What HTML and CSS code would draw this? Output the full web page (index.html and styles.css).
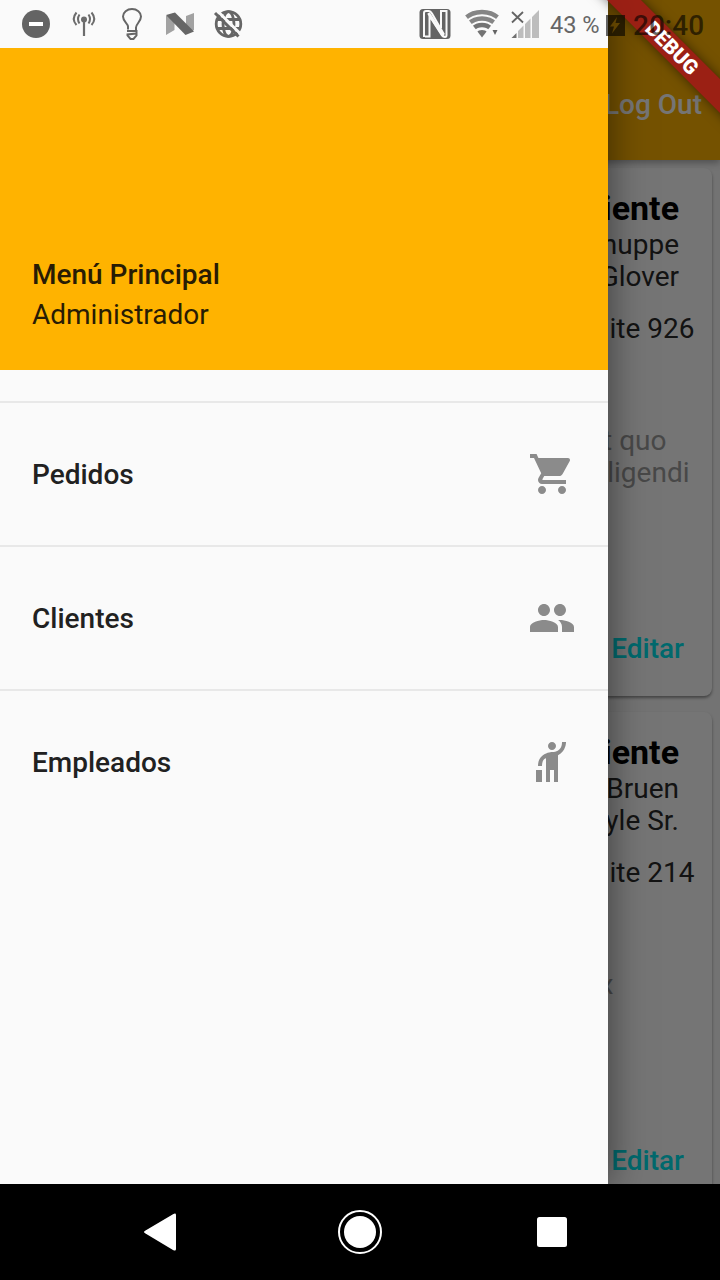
FILE: index.html
```html
<!DOCTYPE html>
<html lang="es">
<head>
<meta charset="utf-8">
<title>Menú Principal</title>
<link rel="stylesheet" href="styles.css">
</head>
<body>
<div class="phone">
  <div class="screen">
    <main class="app">
      <header class="appbar"><span class="logout">Log Out</span></header>
      <div class="cards">
        <article class="card">
          <h2 class="card-title">iente</h2>
          <p class="line">huppe</p>
          <p class="line">Glover</p>
          <p class="line address">ite 926</p>
          <div class="notes">
            <p class="line note-short">t quo</p>
            <p class="line">ligendi</p>
          </div>
          <a class="edit">Editar</a>
        </article>
        <article class="card">
          <h2 class="card-title">iente</h2>
          <p class="line">Bruen</p>
          <p class="line">yle Sr.</p>
          <p class="line address">ite 214</p>
          <div class="notes">
            <p class="line note-end">x</p>
          </div>
          <a class="edit">Editar</a>
        </article>
      </div>
    </main>
    <div class="scrim"></div>
    <aside class="drawer">
      <header class="drawer-header">
        <strong class="drawer-title">Menú Principal</strong>
        <span class="drawer-role">Administrador</span>
      </header>
      <nav class="menu">
        <a class="item"><span>Pedidos</span>
          <svg class="icon" viewBox="0 0 24 24"><path d="M7 18c-1.1 0-1.99.9-1.99 2S5.9 22 7 22s2-.9 2-2-.9-2-2-2zM1 2v2h2l3.6 7.59-1.35 2.45c-.16.28-.25.61-.25.96 0 1.1.9 2 2 2h12v-2H7.42c-.14 0-.25-.11-.25-.25l.03-.12.9-1.63h7.45c.75 0 1.41-.41 1.75-1.03l3.58-6.49c.08-.14.12-.31.12-.48 0-.55-.45-1-1-1H5.21l-.94-2H1zm16 16c-1.1 0-1.99.9-1.99 2s.89 2 1.99 2 2-.9 2-2-.9-2-2-2z"/></svg>
        </a>
        <a class="item"><span>Clientes</span>
          <svg class="icon" viewBox="0 0 24 24"><path d="M16 11c1.66 0 2.99-1.34 2.99-3S17.66 5 16 5c-1.66 0-3 1.34-3 3s1.34 3 3 3zm-8 0c1.66 0 2.99-1.34 2.99-3S9.66 5 8 5C6.34 5 5 6.34 5 8s1.34 3 3 3zm0 2c-2.33 0-7 1.17-7 3.5V19h14v-2.5c0-2.33-4.67-3.5-7-3.5zm8 0c-.29 0-.62.02-.97.05 1.16.84 1.97 1.97 1.97 3.45V19h6v-2.5c0-2.33-4.67-3.5-7-3.5z"/></svg>
        </a>
        <a class="item"><span>Empleados</span>
          <svg class="icon" viewBox="0 0 24 24"><path d="M12 6c-1.1 0-2-.9-2-2s.9-2 2-2 2 .9 2 2-.9 2-2 2zm5-4h2c0 .4 0 4.5-4 6.66V22h-2v-6h-2v6H9V10.1c-.3.1-.5.2-.6.3-.5.3-1.4 1.2-1.4 3.6H5c0-2.1.65-4.1 2.3-5.3C9.7 7 12 7 12 7c5 0 5-4 5-5zM4 16h3v6H4z"/></svg>
        </a>
      </nav>
    </aside>
    <div class="debug"><span class="debug-band">DEBUG</span></div>
    <div class="status">
      <svg class="status-left" viewBox="0 0 260 48">
        <circle cx="36" cy="24" r="14" fill="#646464"/><path d="M29 24h14" stroke="#fff" stroke-width="4"/>
        <g fill="none" stroke="#6c6c6c" stroke-width="2">
          <circle cx="84" cy="19.500" r="3" fill="#6c6c6c" stroke="none"/>
          <path d="M84 20v16" stroke-width="2.200"/>
          <path d="M79.500 14.500q-3 4.500 0 9M88.500 14.500q3 4.500 0 9M76.500 12.500q-5.500 6.500 0 12.500M91.500 12.500q5.500 6.500 0 12.500"/>
        </g>
        <path d="M128 29.500v-3c0-3-5-5-5-10a9 7.500 0 0 1 18 0c0 5-5 7.500-5 11v3.500M127 31h9.500v4.500l-3 3.500h-3l-3-3.500v-1l9-1" fill="none" stroke="#666" stroke-width="2"/>
        <path d="M166 16l8.500-3v17L166 35zM194 13v17l-8 4V16z" fill="#a2a2a2"/>
        <path d="M166 15l9-2.500L194 31.500l-8.500 3.500z" fill="#666"/>
        <g fill="none" stroke="#666" stroke-width="2.800">
          <circle cx="228.500" cy="24" r="12.300"/>
          <ellipse cx="228.500" cy="24" rx="5.500" ry="12.300"/>
          <path d="M217 19.500h23M217 28.500h23"/>
        </g>
        <path d="M217.500 11l24 24" stroke="#fafafa" stroke-width="3"/>
        <path d="M215 13l23.500 23.500" stroke="#666" stroke-width="3"/>
      </svg>
      <svg class="status-right" viewBox="0 0 132 48">
        <rect x="1.500" y="9" width="31" height="30" rx="3.500" fill="#646464"/>
        <g fill="none" stroke="#fafafa">
          <path d="M6 37V13q0-2 2-2h3q1.500 0 3 2.500L26 34.500" stroke-width="2"/>
          <path d="M7 36.500h4.500V16L24 35.500q1 1.500 3 1.500 1.500 0 1.500-2V11H23v17" stroke-width="2"/>
          <path d="M10.500 13l15 23" stroke-width="3"/>
        </g>
        <clipPath id="wifi"><path d="M64 37.500L46.500 14.500Q64 1 81.500 14.500z"/></clipPath>
        <g clip-path="url(#wifi)" fill="none" stroke="#737373" stroke-width="4.500">
          <circle cx="64" cy="38" r="26" stroke="#858585"/><circle cx="64" cy="38" r="19.500" stroke="#858585"/><circle cx="64" cy="38" r="13"/><circle cx="64" cy="38" r="4" stroke-width="8"/>
        </g>
        <path d="M74.500 30h5l-2.500 5z" fill="#646464"/>
        <path d="M94 12l11 10.500M105 12L94 22.500" stroke="#646464" stroke-width="1.800"/>
        <path d="M93.500 38l5-5v5z" fill="#707070"/>
        <path d="M100 38v-7l5.500-5.500V38zM107 38V24l5.500-5.500V38zM114 38V17l7-7v28z" fill="#bdbdbd"/>
      </svg>
      <span class="battery-pct">43 %</span>
      <svg class="battery" viewBox="0 0 19 26"><path fill-rule="evenodd" d="M0 4h19v21H0zM11 6L4 15.500h4l-2 7 8-10.500H9.500z"/></svg>
      <span class="clock">20:40</span>
    </div>
  </div>
  <footer class="navbar">
    <svg viewBox="0 0 60 44"><path d="M7.500 20.500L35 4.200Q38 2.500 38 5v34q0 2.500-3 1L7.500 23.500q-3-1.500 0-3z" fill="#fff"/></svg>
    <svg viewBox="0 0 60 44"><circle cx="30" cy="22" r="16" fill="#fff"/><circle cx="30" cy="22" r="21" fill="none" stroke="#fff" stroke-width="2"/></svg>
    <svg viewBox="0 0 60 44"><rect x="15" y="7" width="30" height="30" rx="2.500" fill="#fff"/></svg>
  </footer>
</div>
</body>
</html>
```
FILE: styles.css
```css
* { box-sizing: border-box; }
body { margin: 0; font-family: Roboto, "Noto Sans", sans-serif; }
h2, p { margin: 0; }
svg { display: block; }

.phone { width: 720px; height: 1280px; display: flex; flex-direction: column; overflow: hidden; }
.screen { position: relative; height: 1184px; overflow: hidden; background: #fafafa; }

/* App page below the drawer */
.app { isolation: isolate; height: 100%; display: flex; flex-direction: column; }
.appbar {
  flex: none; height: 160px; padding: 48px 18px 0; display: flex; align-items: center; justify-content: flex-end;
  background: #ffb300; box-shadow: 0 3px 7px rgba(0, 0, 0, .3); z-index: 1;
}
.logout { font-size: 28px; font-weight: 500; color: #fff; }
.cards { flex: none; padding: 8px; display: flex; flex-direction: column; gap: 16px; }
.card {
  height: 528px; padding: 20px 33px 31px; display: flex; flex-direction: column; align-items: flex-end;
  background: #fff; border-radius: 8px; box-shadow: 0 2px 3px rgba(0, 0, 0, .4);
}
.card-title { margin-bottom: 1px; font-size: 34px; line-height: 40px; font-weight: 700; color: #000; }
.line { font-size: 28px; line-height: 32px; color: #2b2b2b; white-space: nowrap; }
.address { margin: 20px -15.5px 0 0; }
.notes { margin: 80px -10.5px 0 0; display: flex; flex-direction: column; align-items: flex-end; }
.notes .line { color: #9e9e9e; }
.notes .note-short { margin-right: 23px; }
.notes .note-end { margin-right: 76px; }
.edit { margin: auto -5px 0 0; font-size: 28px; line-height: 32px; font-weight: 500; color: #00e5ee; }
.card:last-child { height: 496px; }

.scrim { position: absolute; inset: 0; background: rgba(0, 0, 0, .54); }

/* Drawer */
.drawer {
  position: absolute; left: 0; top: 0; width: 608px; height: 100%;
  display: flex; flex-direction: column; padding-top: 48px;
  background: #fafafa; box-shadow: 0 0 36px rgba(0, 0, 0, .5);
}
.drawer-header {
  height: 322px; padding: 0 32px 39px; display: flex; flex-direction: column; justify-content: flex-end;
  background: #ffb300; color: #281c04; font-size: 28px;
}
.drawer-title { line-height: 32px; font-weight: 500; margin-bottom: 8px; }
.drawer-role { line-height: 32px; }
.menu { padding-top: 31px; display: flex; flex-direction: column; }
.item {
  height: 144px; padding: 0 32px; display: flex; align-items: center; justify-content: space-between;
  border-top: 2px solid #e8e8e8; font-size: 28px; font-weight: 500; color: #212121;
}
.icon { width: 48px; height: 48px; fill: #8b8b8b; }

/* Corner ribbon */
.debug { position: absolute; top: 0; right: 0; width: 160px; height: 160px; overflow: hidden; }
.debug-band {
  position: absolute; left: 12px; top: 36px; width: 200px; height: 24px; transform: rotate(45deg);
  background: rgba(165, 20, 25, .8); box-shadow: 0 0 12px rgba(0, 0, 0, .5);
  color: #fff; font-size: 20.4px; line-height: 24px; font-weight: 900; text-align: center;
}

.status { position: absolute; left: 0; top: 0; width: 100%; height: 48px; display: flex; align-items: center; }
.status-left { width: 260px; height: 48px; margin-right: 158px; }
.status-right { width: 132px; height: 48px; }
.battery-pct { width: 56px; padding-top: 1px; font-size: 23.6px; color: #666; white-space: nowrap; }
.battery { width: 19px; height: 26px; fill: #000; opacity: .6; }
.clock { margin-left: 8px; padding-top: 2px; font-size: 28px; font-weight: 500; color: rgba(0, 0, 0, .6); }

/* System navigation */
.navbar { height: 96px; padding: 0 138px; display: flex; align-items: center; justify-content: space-between; background: #000; }
.navbar svg { width: 60px; height: 44px; }
```
